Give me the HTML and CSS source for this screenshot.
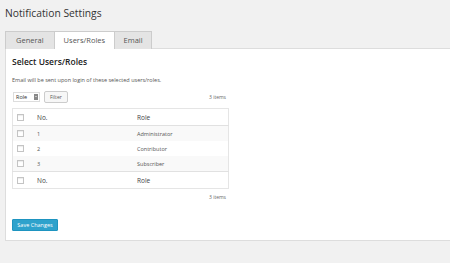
FILE: index.html
```html
<!DOCTYPE html>
<html lang="en">
<head>
    <meta charset="UTF-8">
    <title>Notification Settings</title>
    <link rel="stylesheet" href="styles.css">
</head>
<body>
    <div class="wrap">
        <h1 class="page-title">Notification Settings</h1>

        <div class="tabs">
            <a class="tab">General</a>
            <a class="tab active">Users/Roles</a>
            <a class="tab last">Email</a>
        </div>

        <div class="panel">
            <h2 class="section-title">Select Users/Roles</h2>
            <p class="hint">Email will be sent upon login of these selected users/roles.</p>

            <div class="tablenav">
                <div class="actions">
                    <span class="select">Role <span class="arrow"></span></span>
                    <button class="btn">Filter</button>
                </div>
                <span class="count">3 items</span>
            </div>

            <table class="list">
                <thead>
                    <tr><th class="cb"><span class="check"></span></th><th class="num">No.</th><th>Role</th></tr>
                </thead>
                <tbody>
                    <tr class="alt"><td class="cb"><span class="check"></span></td><td class="num">1</td><td>Administrator</td></tr>
                    <tr><td class="cb"><span class="check"></span></td><td class="num">2</td><td>Contributor</td></tr>
                    <tr class="alt"><td class="cb"><span class="check"></span></td><td class="num">3</td><td>Subscriber</td></tr>
                </tbody>
                <tfoot>
                    <tr><th class="cb"><span class="check"></span></th><th class="num">No.</th><th>Role</th></tr>
                </tfoot>
            </table>

            <div class="tablenav bottom">
                <span class="count">3 items</span>
            </div>

            <button class="btn primary">Save Changes</button>
        </div>
    </div>
</body>
</html>
```

FILE: styles.css
```css
body { margin: 0; background: #f1f1f1; font-family: "Open Sans", "Liberation Sans", sans-serif; color: #444; }
.wrap { padding-left: 5px; }
.page-title { margin: 0; padding-top: 6px; height: 25px; font-size: 10.3px; line-height: 14px; font-weight: 400; color: #333; }

.tabs { display: flex; padding-left: 0; height: 17px; }
.tab { display: block; box-sizing: border-box; height: 18px; padding: 0 10px; line-height: 17px; font-size: 7.5px; color: #555; background: #e4e4e4; border: 1px solid #ccc; border-bottom: none; margin-right: -1px; }
.tab.active { background: #fff; position: relative; z-index: 1; padding: 0 9px; }
.tab.last { padding: 0 8.5px; }

.panel { background: #fff; border: 1px solid #ddd; border-right: none; padding: 0 0 10px 6px; height: 181px; }
.section-title { margin: 7px 0 0; font-size: 8.5px; line-height: 12px; font-weight: 600; color: #222; }
.hint { margin: 8px 0 0; font-size: 5.5px; line-height: 8px; color: #555; }

.tablenav { display: flex; justify-content: space-between; align-items: center; width: 214px; margin-top: 6px; height: 13px; }
.actions { display: flex; align-items: center; gap: 4px; padding-left: 1px; }
.select { display: flex; align-items: center; box-sizing: border-box; width: 27px; height: 10px; padding-left: 2px; font-size: 5.5px; color: #333; border: 1px solid #ddd; background: #fff; }
.arrow { margin-left: auto; margin-right: 1px; width: 4px; height: 6px; background: #888; position: relative; }
.arrow::after { content: ""; position: absolute; left: 1px; top: 2px; border: 1px solid transparent; border-top-color: #fff; }
.btn { box-sizing: border-box; height: 12px; padding: 0 5px; font-family: inherit; font-size: 5px; color: #555; background: #f7f7f7; border: 1px solid #ccc; border-radius: 2px; }
.count { font-size: 5px; color: #666; }

.list { margin-top: 5px; width: 217px; border: 1px solid #e5e5e5; border-collapse: collapse; font-size: 5.5px; color: #555; }
.list th, .list td { text-align: left; padding: 0; height: 15px; }
.list th { font-weight: 400; font-size: 6.5px; color: #444; height: 16px; }
.list thead tr { border-bottom: 1px solid #e1e1e1; }
.list tfoot tr { border-top: 1px solid #e1e1e1; }
.list .alt { background: #f9f9f9; }
.list .cb { width: 20px; padding-left: 4px; }
.list .num { width: 100px; }
.check { display: block; width: 5px; height: 5px; border: 1px solid #c4c4c4; background: #fff; box-shadow: inset 0 1px 1px rgba(0,0,0,0.08); }

.tablenav.bottom { justify-content: flex-end; margin-top: 2px; height: 12px; }

.btn.primary { display: block; margin-top: 16px; height: 12px; width: 46px; padding: 0; font-size: 5.5px; color: #fff; background: #2ea2cc; border-color: #1e94c0; border-radius: 1px; }
```
